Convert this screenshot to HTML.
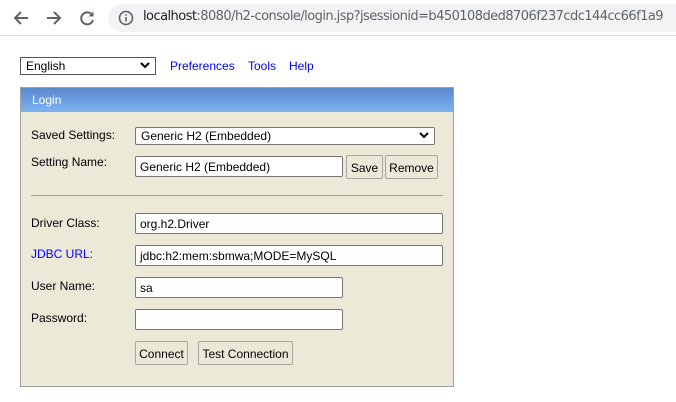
<!DOCTYPE html>
<html><head><meta charset="utf-8"><style>
*{margin:0;padding:0;box-sizing:border-box}
body{width:676px;height:402px;background:#fff;position:relative;overflow:hidden;font-family:"Liberation Sans",Arial,sans-serif;font-size:12px;color:#000}
.a{position:absolute}
.bar{left:108px;top:4px;width:600px;height:28px;background:#f1f3f4;border-radius:14px}
.url{left:143px;top:9px;font-family:"DejaVu Sans",sans-serif;font-size:13px;color:#202124;letter-spacing:-0.55px;white-space:nowrap}
.url span{color:#5f6368}
.sep{left:0;top:35px;width:676px;height:1px;background:#dadce0}
.lnk{color:#0000ff;top:59px}
.panel{left:20px;top:87px;width:434px;height:300px;background:#ece9d8;border:1px solid #a0a0a0}
.hdr{left:0;top:0;width:432px;height:24px;background:linear-gradient(#5a88cd,#7db2f0);color:#fff;padding:5px 0 0 11px}
.lbl{left:10px}
.inp{background:#fff;border:1px solid #767676;border-radius:2px;height:21px;padding:3px 0 0 4px;white-space:nowrap}
.sel{background:#fff;border:1px solid #767676;border-radius:2px;height:18px;padding:1px 0 0 5px}
.btn{background:#ece9d8;border:1px solid #a8a69c;border-radius:2px;height:24px;padding:5px 0 0 0;text-align:center}
.chev{position:absolute;right:5px;top:3px}
</style></head><body>
<svg class="a" style="left:12px;top:9px" width="18" height="18" viewBox="0 0 18 18"><path d="M16 9H3M9 3L3 9l6 6" stroke="#5f6368" stroke-width="2" fill="none"/></svg>
<svg class="a" style="left:45px;top:9px" width="18" height="18" viewBox="0 0 18 18"><path d="M2 9h13M9 3l6 6-6 6" stroke="#5f6368" stroke-width="2" fill="none"/></svg>
<svg class="a" style="left:78px;top:9px" width="18" height="18" viewBox="0 0 18 18"><path d="M14.5 6.5A6 6 0 1 0 15 11" stroke="#5f6368" stroke-width="2" fill="none"/><path d="M15.5 2.5v5h-5z" fill="#5f6368"/></svg>
<div class="a bar"></div>
<svg class="a" style="left:118px;top:10px" width="16" height="16" viewBox="0 0 16 16"><circle cx="8" cy="8" r="6.5" stroke="#5f6368" stroke-width="1.6" fill="none"/><path d="M8 7v4.5M8 4.3v1.4" stroke="#5f6368" stroke-width="1.6"/></svg>
<div class="a url">localhost<span>:8080/h2-console/login.jsp?jsessionid=b450108ded8706f237cdc144cc66f1a9</span></div>
<div class="a sep"></div>

<div class="a sel" style="left:20px;top:57px;width:136px;height:18px;border-color:#555;border-radius:0;padding-top:1px">English<svg class="chev" width="10" height="8" viewBox="0 0 10 8"><path d="M1 2l4 4 4-4" stroke="#000" stroke-width="2" fill="none"/></svg></div>
<div class="a lnk" style="left:170px">Preferences</div>
<div class="a lnk" style="left:248px">Tools</div>
<div class="a lnk" style="left:289px">Help</div>

<div class="a panel">
<div class="a hdr">Login</div>
<div class="a lbl" style="top:40px">Saved Settings:</div>
<div class="a sel" style="left:114px;top:39px;width:300px">Generic H2 (Embedded)<svg class="chev" width="10" height="8" viewBox="0 0 10 8"><path d="M1 2l4 4 4-4" stroke="#000" stroke-width="2" fill="none"/></svg></div>
<div class="a lbl" style="top:67px">Setting Name:</div>
<div class="a inp" style="left:114px;top:68px;width:208px">Generic H2 (Embedded)</div>
<div class="a btn" style="left:325px;top:67px;width:37px">Save</div>
<div class="a btn" style="left:364px;top:67px;width:53px">Remove</div>
<div class="a" style="left:10px;top:107px;width:412px;height:1px;background:#a0a0a0"></div>
<div class="a lbl" style="top:128px">Driver Class:</div>
<div class="a inp" style="left:114px;top:125px;width:308px">org.h2.Driver</div>
<div class="a lbl" style="top:159px;color:#0000ff">JDBC URL:</div>
<div class="a inp" style="left:114px;top:157px;width:308px">jdbc:h2:mem:sbmwa;MODE=MySQL</div>
<div class="a lbl" style="top:191px">User Name:</div>
<div class="a inp" style="left:114px;top:189px;width:208px">sa</div>
<div class="a lbl" style="top:223px">Password:</div>
<div class="a inp" style="left:114px;top:221px;width:208px"></div>
<div class="a btn" style="left:114px;top:253px;width:53px">Connect</div>
<div class="a btn" style="left:177px;top:253px;width:95px">Test Connection</div>
</div>
</body></html>
